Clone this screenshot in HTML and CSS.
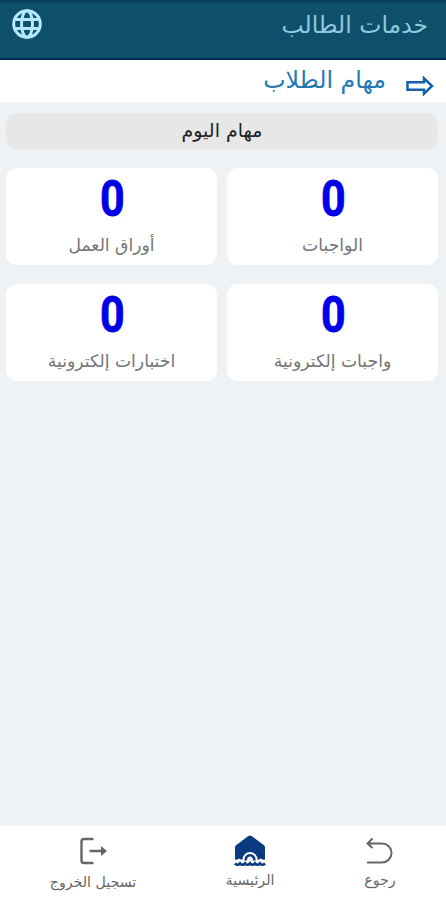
FILE: index.html
```html
<!DOCTYPE html>
<html lang="ar" dir="rtl">
<head>
    <meta charset="UTF-8">
    <meta name="viewport" content="width=device-width, initial-scale=1.0">
    <title>خدمات الطالب</title>
    <link rel="stylesheet" href="styles.css">
</head>
<body>

<div class="app">
    <header class="top-bar">
        <h1>خدمات الطالب</h1>
        <svg class="globe" viewBox="0 0 30 30" fill="none" stroke="#b5e8fa" stroke-width="3">
            <circle cx="15" cy="15" r="13.3"/>
            <ellipse cx="15" cy="15" rx="5.5" ry="13.3"/>
            <path d="M3 10.5h24M3 19.5h24"/>
        </svg>
    </header>

    <div class="page-title">
        <svg class="arrow" viewBox="0 0 28 20" fill="none" stroke="#1261a8" stroke-width="2.5">
            <path d="M1.5 6.3H18V2.3l8 7.7-8 7.7v-4H1.5z"/>
        </svg>
        <h2>مهام الطلاب</h2>
    </div>

    <main>
        <div class="today"><span>مهام اليوم</span></div>

        <div class="cards">
            <div class="card">
                <div class="count">0</div>
                <div class="label">الواجبات</div>
            </div>
            <div class="card">
                <div class="count">0</div>
                <div class="label">أوراق العمل</div>
            </div>
            <div class="card">
                <div class="count">0</div>
                <div class="label">واجبات إلكترونية</div>
            </div>
            <div class="card">
                <div class="count">0</div>
                <div class="label">اختبارات إلكترونية</div>
            </div>
        </div>
    </main>

    <nav class="bottom-nav">
        <a class="nav-item back">
            <svg viewBox="0 0 32 32" fill="none" stroke="#666" stroke-width="2">
                <path d="M8.5 3.5l-5 5 5 4.5M3.5 8.5H18a9.5 9.5 0 0 1 0 19H3"/>
            </svg>
            <span>رجوع</span>
        </a>
        <a class="nav-item home">
            <svg viewBox="0 0 32 32" fill="none">
                <path fill="#0b3a82" d="M16 .5q1 0 2 .7l12 9q1 .8 1 2V25H1V12.200q0-1.200 1-2l12-9q1-.7 2-.7z"/>
                <circle cx="16" cy="24.500" r="7.500" fill="#fff"/>
                <path fill="#fff" d="M0 24q3 1.500 5.500-.5 2 2 4.500 1h12q2.500 1 4.500-1 2.500 2 5.500.5v8H0z"/>
                <path stroke="#0b3a82" stroke-width="2.500" d="M11.800 25.500a4.300 4.300 0 1 1 8.400 0"/>
                <path stroke="#0b3a82" stroke-width="2.600" d="M1 28.300q2.500 3 5 0q2.500 3 5 0q2.500 3 5 0q2.500 3 5 0q2.500 3 5 0q2.500 3 5 0"/>
            </svg>
            <span>الرئيسية</span>
        </a>
        <a class="nav-item logout">
            <svg viewBox="0 0 32 32" fill="none" stroke="#666" stroke-width="2.4">
                <path d="M16.500 4H7Q4.500 4 4.500 6.500v19Q4.500 28 7 28h9.500M12.500 16H28"/>
                <path fill="#666" stroke="none" d="M24 11l6 5-6 5z"/>
            </svg>
            <span>تسجيل الخروج</span>
        </a>
    </nav>
</div>

</body>
</html>
```
FILE: styles.css
```css
* {
    box-sizing: border-box;
}
body {
    margin: 0;
    background: #eef2f5;
    font-family: "DejaVu Sans", sans-serif;
}
.app {
    height: 900px;
    display: flex;
    flex-direction: column;
}
h1, h2 {
    margin: 0;
    font-weight: normal;
}

/* Header */
.top-bar {
    height: 60px;
    padding: 9px 18px 0 12px;
    display: flex;
    justify-content: space-between;
    background: linear-gradient(#083a52, #0e4f69 4px);
    border-bottom: 2px solid #06294f;
}
.top-bar h1 {
    font-size: 23.5px;
    line-height: 33px;
    color: #8fc9df;
}
.globe {
    width: 30px;
    height: 30px;
}
.page-title {
    height: 42px;
    padding: 0 12px;
    display: flex;
    gap: 20px;
    background: #fff;
}
.page-title .arrow {
    width: 28px;
    height: 20px;
    margin-top: 16px;
}
.page-title h2 {
    font-size: 23.7px;
    line-height: 41px;
    color: #2478b5;
}

/* Tasks */
main {
    flex: 1;
    padding: 11px 8px 0 6px;
}
.today {
    height: 36px;
    border-radius: 11px;
    background: #e7e7e7;
    text-align: center;
    font-size: 19px;
    line-height: 34px;
    color: #222;
}
.cards {
    display: grid;
    grid-template-columns: 1fr 1fr;
    gap: 19px 10px;
    margin-top: 19px;
}
.card {
    height: 97px;
    border-radius: 11px;
    background: #fff;
    text-align: center;
}
.count {
    padding-left: 2px;
    font-family: Roboto, sans-serif;
    font-weight: bold;
    font-size: 50px;
    line-height: 62px;
    color: #0000e6;
    -webkit-text-stroke: .8px #0000e6;
    transform: scaleX(.86);
}
.label {
    font-size: 17.2px;
    line-height: 31px;
    color: #757575;
}

/* Bottom navigation */
.bottom-nav {
    height: 74px;
    display: flex;
    padding: 9px 16px 0 28px;
    background: #fff;
}
.nav-item {
    width: 100px;
    display: flex;
    flex-direction: column;
    align-items: center;
    font-size: 14.2px;
    line-height: 27px;
    color: #666;
}
.nav-item svg {
    width: 32px;
    height: 32px;
}
.home {
    margin-right: 30px;
}
.logout {
    width: 130px;
    margin-right: auto;
    line-height: 31px;
}
```
